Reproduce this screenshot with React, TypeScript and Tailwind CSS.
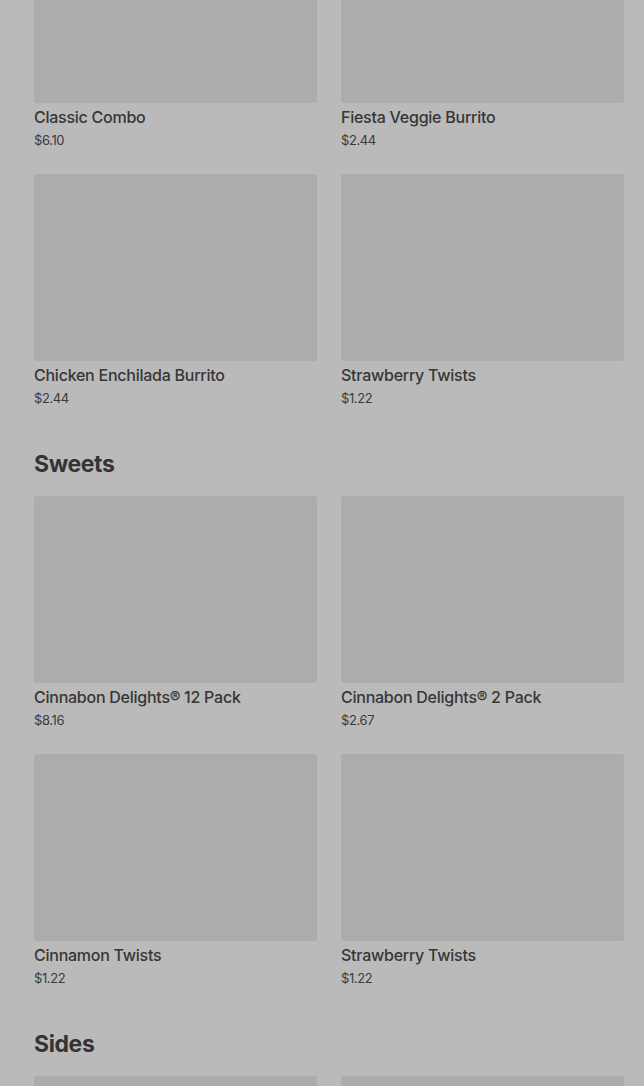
import React from "react";

type Item = { name?: string; price?: string };

const sections: { title?: string; items: Item[] }[] = [
  {
    items: [
      { name: "Classic Combo", price: "$6.10" },
      { name: "Fiesta Veggie Burrito", price: "$2.44" },
      { name: "Chicken Enchilada Burrito", price: "$2.44" },
      { name: "Strawberry Twists", price: "$1.22" },
    ],
  },
  {
    title: "Sweets",
    items: [
      { name: "Cinnabon Delights® 12 Pack", price: "$8.16" },
      { name: "Cinnabon Delights® 2 Pack", price: "$2.67" },
      { name: "Cinnamon Twists", price: "$1.22" },
      { name: "Strawberry Twists", price: "$1.22" },
    ],
  },
  {
    title: "Sides",
    // below the fold, only the image tops show
    items: [{}, {}],
  },
];

function MenuCard({ item }: { item: Item }) {
  return (
    <div className="flex min-w-0 flex-col">
      <div className="h-[187px] w-full rounded-[3px] bg-[#acacac]" />
      {item.name && (
        <>
          <p className="mt-[2px] truncate text-[16px] font-medium leading-6 tracking-[-0.25px] text-[#363636]">
            {item.name}
          </p>
          <p className="pt-px text-[13px] leading-5 tracking-[-0.4px] text-[#3a3a3a]">
            {item.price}
          </p>
        </>
      )}
    </div>
  );
}

export default function App() {
  return (
    <div
      className="h-[1086px] overflow-hidden bg-[#bababa]"
      style={{ fontFamily: "Inter, 'Liberation Sans', sans-serif" }}
    >
      <div className="-mt-[84px] pl-[34px] pr-[20px]">
        {sections.map((section, i) => (
          <section key={i}>
            {section.title && (
              <h2 className="mb-[16px] mt-[40px] text-[23px] font-bold leading-8 tracking-[-0.4px] text-[#343434]">
                {section.title}
              </h2>
            )}
            <div className="grid grid-cols-2 gap-x-6 gap-y-[24px]">
              {section.items.map((item, j) => (
                <MenuCard key={j} item={item} />
              ))}
            </div>
          </section>
        ))}
      </div>
    </div>
  );
}
